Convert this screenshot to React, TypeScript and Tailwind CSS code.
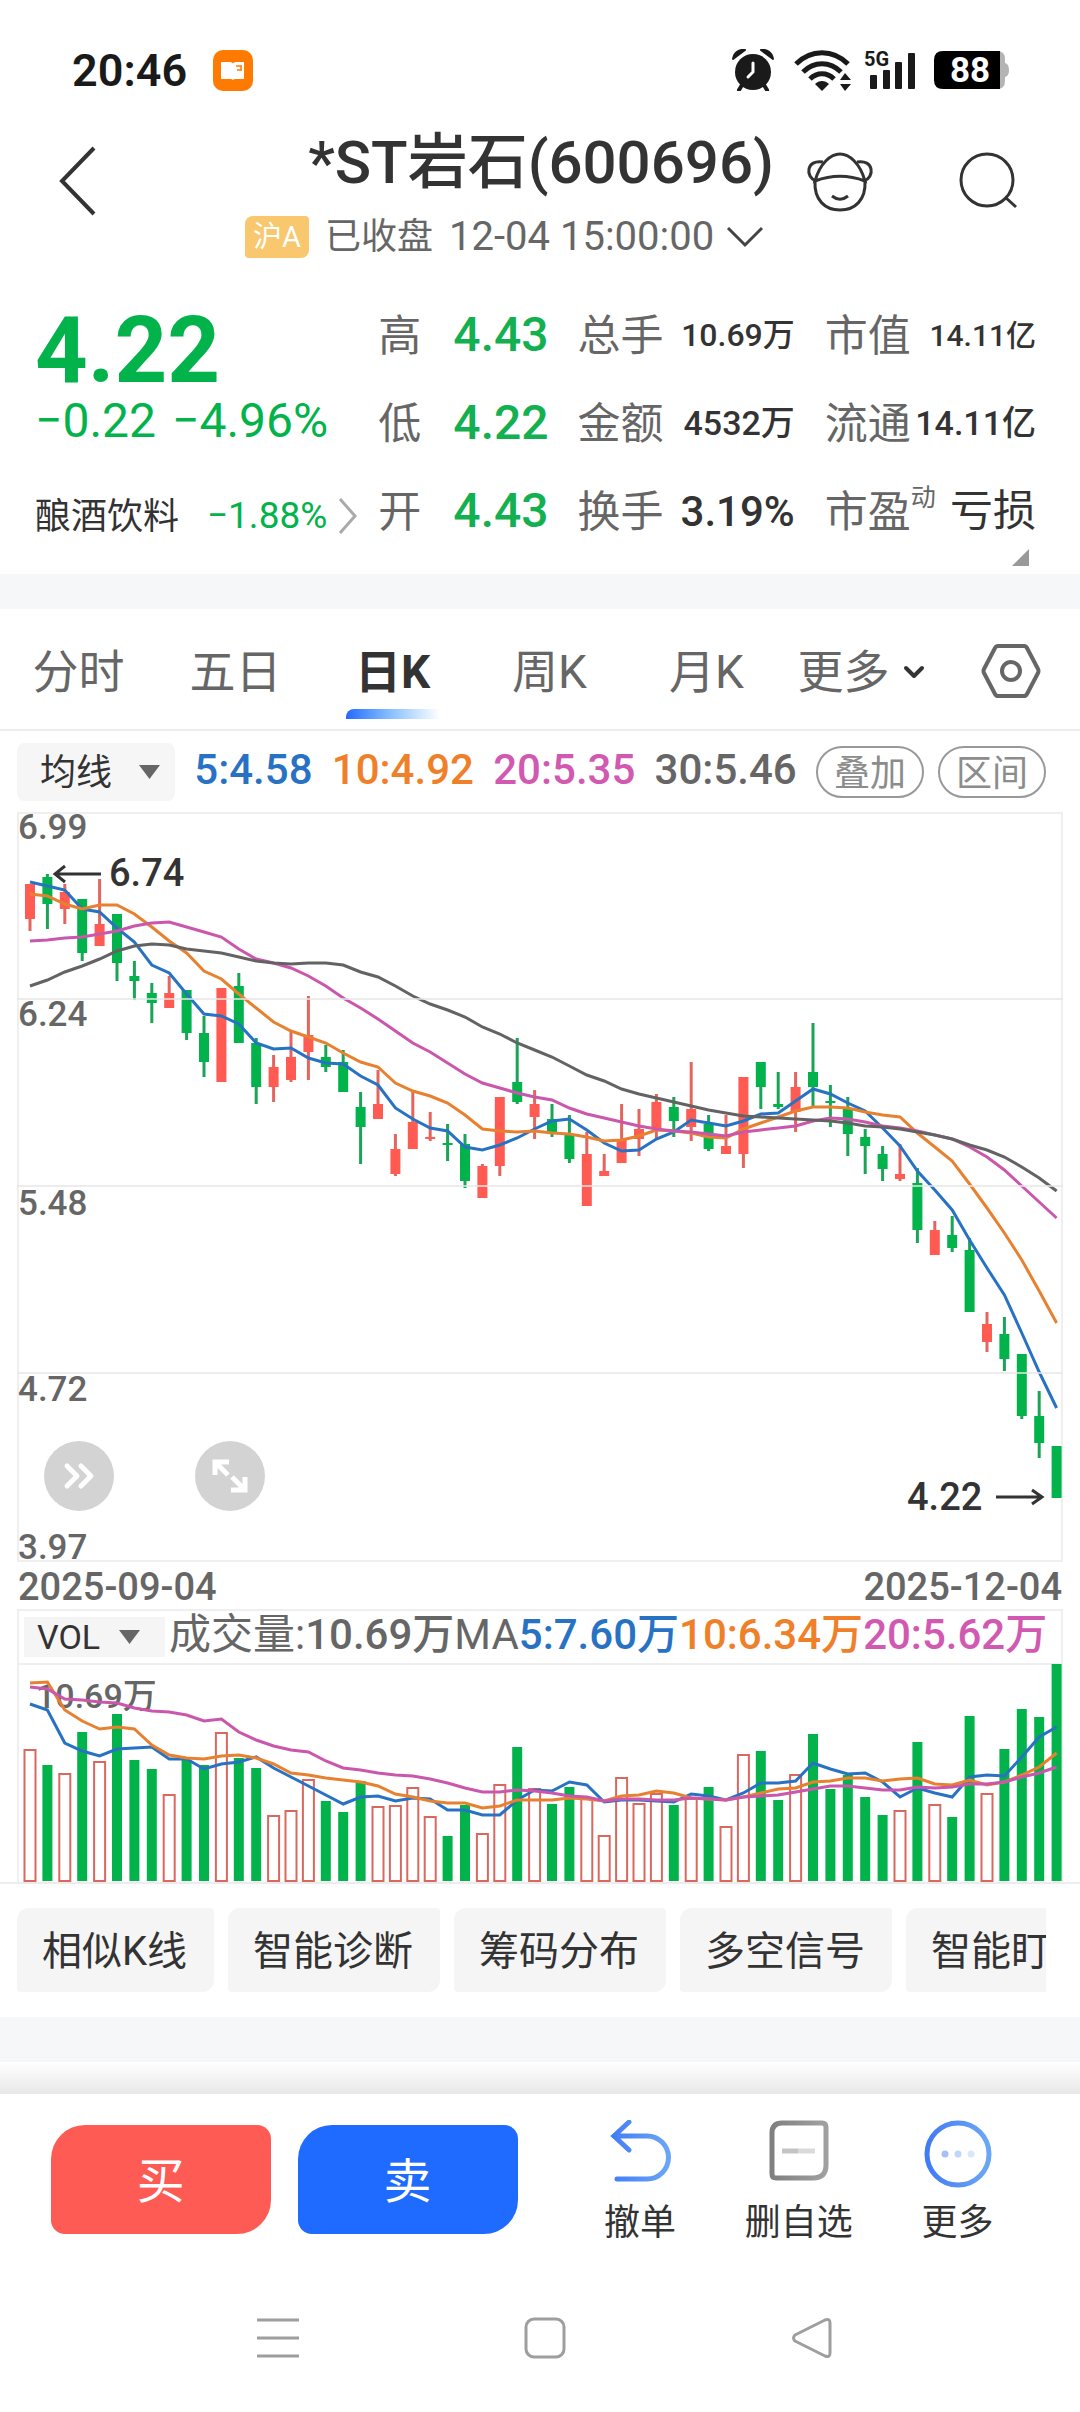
import React from "react";
import { ChevronDown, ChevronsRight } from "lucide-react";

type Candle = [dir: number, high: number, top: number, bottom: number, low: number];

// [1: 上涨 / 0: 下跌, 最高, 实体上沿, 实体下沿, 最低]
const candles: Candle[] = [
    [1, 72, 72, 107, 119], [0, 62, 65, 92, 117], [1, 72, 80, 97, 112], [0, 87, 87, 141, 149],
    [1, 67, 112, 134, 134], [0, 102, 102, 151, 169], [0, 149, 164, 169, 188], [0, 171, 181, 191, 211],
    [1, 164, 181, 196, 196], [0, 178, 178, 221, 228], [0, 204, 221, 250, 265], [1, 176, 176, 270, 270],
    [0, 161, 174, 231, 231], [0, 226, 231, 275, 292], [1, 243, 255, 275, 290], [1, 220, 245, 268, 270],
    [1, 184, 223, 240, 268], [0, 233, 245, 255, 260], [0, 238, 250, 280, 280], [0, 280, 295, 315, 352],
    [1, 258, 292, 307, 307], [1, 322, 337, 362, 364], [1, 279, 310, 337, 337], [1, 300, 325, 327, 329],
    [0, 312, 331, 333, 349], [0, 322, 332, 369, 376], [1, 352, 354, 386, 386], [1, 285, 285, 354, 364],
    [0, 226, 270, 290, 292], [1, 278, 292, 305, 327], [0, 292, 307, 320, 325], [0, 303, 322, 347, 351],
    [1, 320, 342, 394, 394], [1, 342, 359, 364, 364], [1, 292, 327, 351, 351], [1, 297, 317, 327, 344],
    [1, 282, 290, 317, 327], [0, 285, 295, 309, 325], [1, 250, 297, 315, 329], [0, 303, 312, 337, 339],
    [1, 303, 334, 342, 342], [1, 265, 265, 342, 356], [0, 250, 250, 275, 297], [0, 260, 292, 295, 297],
    [1, 260, 275, 300, 320], [0, 211, 260, 275, 295], [0, 273, 289, 291, 315], [0, 285, 297, 322, 344],
    [0, 317, 325, 334, 362], [0, 334, 342, 357, 369], [1, 332, 362, 367, 369], [0, 356, 371, 418, 431],
    [1, 409, 418, 443, 443], [0, 404, 423, 436, 440], [0, 426, 438, 500, 500], [1, 500, 512, 530, 540],
    [0, 505, 522, 547, 559], [0, 542, 542, 604, 607], [0, 579, 604, 631, 646], [0, 634, 634, 686, 686],
];

const volumes = [
    86, 102, 110, 69, 98, 51, 97, 106, 131, 97, 102, 69, 95, 105, 152, 147, 116, 138, 149, 118,
    143, 142, 124, 153, 173, 142, 170, 121, 84, 125, 141, 124, 134, 172, 114, 140, 130, 142, 135, 124,
    163, 91, 88, 137, 111, 71, 126, 112, 134, 152, 147, 79, 141, 154, 53, 130, 86, 46, 54, 1,
];

const BLUE = "#2872c4";
const ORANGE = "#e8812f";
const PINK = "#cb57ad";
const GRAY = "#636363";

const priceLines = [
    {
        color: BLUE,
        ys: [
            70, 74, 78, 97, 100, 116, 130, 153, 161, 182, 202, 204, 212, 231, 237, 236, 246, 251, 252, 264,
            273, 296, 307, 316, 319, 335, 338, 333, 326, 317, 309, 307, 318, 331, 339, 338, 327, 320, 308, 311,
            314, 309, 302, 301, 289, 277, 282, 291, 299, 316, 334, 359, 378, 398, 428, 456, 483, 521, 560, 596,
        ],
    },
    {
        color: ORANGE,
        ys: [
            82, 84, 92, 97, 93, 93, 102, 115, 129, 141, 159, 167, 182, 196, 210, 219, 225, 231, 241, 250,
            255, 271, 279, 284, 291, 303, 317, 319, 320, 319, 321, 322, 325, 329, 328, 324, 318, 319, 321, 325,
            326, 317, 311, 305, 299, 295, 295, 296, 300, 303, 305, 321, 335, 349, 372, 396, 421, 448, 479, 511,
        ],
    },
    {
        color: PINK,
        ys: [
            129, 128, 126, 125, 122, 119, 114, 111, 110, 115, 120, 125, 137, 147, 151, 156, 164, 174, 186, 196,
            207, 219, 231, 240, 251, 262, 271, 276, 281, 285, 288, 296, 302, 306, 310, 314, 317, 319, 320, 322,
            324, 320, 318, 316, 314, 309, 306, 307, 310, 314, 316, 319, 323, 327, 335, 345, 358, 374, 390, 406,
        ],
    },
    {
        color: GRAY,
        ys: [
            174, 168, 160, 154, 147, 139, 134, 132, 133, 137, 139, 141, 145, 149, 151, 152, 151, 151, 153, 160,
            165, 174, 184, 192, 198, 205, 215, 222, 231, 238, 245, 254, 263, 269, 277, 282, 286, 290, 294, 298,
            301, 304, 305, 306, 307, 308, 309, 311, 314, 315, 317, 320, 323, 327, 333, 338, 345, 355, 366, 379,
        ],
    },
];

const volumeLines = [
    {
        color: BLUE,
        ys: [
            41, 47, 80, 88, 93, 86, 85, 84, 96, 96, 106, 101, 99, 94, 105, 114, 123, 132, 141, 134,
            133, 138, 135, 136, 147, 147, 152, 152, 137, 127, 128, 119, 122, 139, 137, 137, 138, 139, 131, 133,
            137, 130, 120, 120, 118, 100, 106, 111, 110, 119, 134, 125, 130, 134, 114, 112, 113, 94, 74, 64,
        ],
    },
    {
        color: ORANGE,
        ys: [
            20, 19, 47, 58, 66, 64, 66, 82, 92, 95, 96, 93, 92, 95, 101, 110, 112, 115, 117, 119,
            123, 131, 134, 138, 140, 140, 145, 143, 137, 137, 137, 135, 136, 138, 133, 132, 128, 130, 135, 136,
            137, 134, 130, 126, 125, 119, 118, 115, 115, 118, 116, 115, 121, 122, 117, 122, 119, 112, 104, 90,
        ],
    },
    {
        color: PINK,
        ys: [
            24, 26, 36, 37, 39, 40, 45, 48, 49, 52, 58, 56, 69, 77, 83, 87, 89, 98, 105, 107,
            110, 112, 113, 116, 120, 125, 129, 129, 127, 128, 130, 133, 134, 138, 136, 136, 137, 137, 135, 136,
            137, 134, 133, 132, 129, 126, 123, 123, 125, 127, 127, 124, 125, 124, 121, 121, 119, 114, 110, 104,
        ],
    },
];

const priceLabels = [
    { text: "6.99", y: 27 },
    { text: "6.24", y: 214 },
    { text: "5.48", y: 403 },
    { text: "4.72", y: 589 },
    { text: "3.97", y: 747 },
];

const tabs = ["分时", "五日", "日K", "周K", "月K"];
const tools = ["相似K线", "智能诊断", "筹码分布", "多空信号", "智能盯盘"];

const xAt = (i: number) => 13 + i * 17.4;
const toPoints = (ys: number[]) => ys.map((y, i) => `${xAt(i)},${y}`).join(" ");

const StatusBar: React.FC = () => (
    <div className="flex h-28 items-center justify-between pt-7 pr-[71px] pl-[72px]">
        <div className="flex items-center gap-[26px]">
            <span className="text-[45px] leading-none font-semibold text-[#1a1a1a]">20:46</span>
            <svg width="40" height="41" viewBox="0 0 40 41">
                <rect width="40" height="41" rx="10" fill="#ff7a00" />
                <path d="M8 12h9c2 0 3 1 3 2 0-1 1-2 3-2h8v17h-9c-1 0-2 1-2 1s-1-1-2-1H8z" fill="#fff" />
                <path d="M23 16h6M24 20h5M28 16v4" stroke="#ff7a00" strokeWidth="1.5" />
            </svg>
        </div>
        <div className="flex items-center">
            <svg width="42" height="42" viewBox="0 0 42 42" className="mr-5">
                <circle cx="21" cy="23" r="18" fill="#1a1a1a" />
                <path d="M10 36l-3 5M32 36l3 5" stroke="#1a1a1a" strokeWidth="4" strokeLinecap="round" />
                <path d="M1 10C2 4 7 0 13 1z" fill="#1a1a1a" stroke="#1a1a1a" strokeWidth="2" strokeLinejoin="round" />
                <path d="M41 10C40 4 35 0 29 1z" fill="#1a1a1a" stroke="#1a1a1a" strokeWidth="2" strokeLinejoin="round" />
                <path d="M21 14v9l-5 5" fill="none" stroke="#fff" strokeWidth="3" strokeLinecap="round" />
            </svg>
            <svg width="58" height="41" viewBox="0 0 58 41" className="mr-3">
                <g fill="none" stroke="#1a1a1a" strokeWidth="5">
                    <path d="M2 14C17-1 39-1 54 14" />
                    <path d="M9 22C20 11 36 11 47 22" />
                    <path d="M16 29C23 22 33 22 40 29" />
                </g>
                <path d="M21 34c4-4 10-4 14 0l-7 7z" fill="#1a1a1a" />
                <path d="M46 30l5-7 6 7zM46 34h11l-6 7z" fill="#1a1a1a" />
            </svg>
            <svg width="54" height="40" viewBox="0 0 54 40" className="mr-4 overflow-visible">
                <text x="0" y="16" fontSize="20" fontWeight="700" fill="#1a1a1a">5G</text>
                <rect x="6" y="25" width="7" height="14" rx="1" fill="#1a1a1a" />
                <rect x="19" y="20" width="7" height="19" rx="1" fill="#1a1a1a" />
                <rect x="31" y="12" width="7" height="27" rx="1" fill="#1a1a1a" />
                <rect x="44" y="3" width="7" height="36" rx="1" fill="#1a1a1a" />
            </svg>
            <svg width="75" height="40" viewBox="0 0 75 40">
                <path d="M60 1h3q8 0 8 8v4q4 1 4 7t-4 7v4q0 8-8 8h-3z" fill="#b4b4b4" />
                <path d="M9 1h57v38H9q-9 0-9-9V10q0-9 9-9z" fill="#000" />
                <text x="36" y="32" textAnchor="middle" fontSize="35" fontWeight="700" fill="#fff">88</text>
            </svg>
        </div>
    </div>
);

const Header: React.FC = () => (
    <header className="flex pt-[15px] pr-[62px]">
        <div className="flex w-[245px] shrink-0 items-start pt-[19px] pl-[57px]">
            <button aria-label="返回">
                <svg width="40" height="70" viewBox="0 0 40 70" fill="none" stroke="#333" strokeWidth="4">
                    <path d="M37 2L5 35l32 33" />
                </svg>
            </button>
        </div>
        <div className="flex flex-1 flex-col">
            <h1 className="self-end pr-1 text-[60px] leading-[72px] font-medium whitespace-nowrap text-[#333]">*ST岩石(600696)</h1>
            <button className="mt-4 flex items-center self-start text-[36px] leading-[44px] whitespace-nowrap text-[#666]">
                <span className="mr-4 h-[42px] w-16 rounded-tl-lg rounded-tr-sm rounded-br-lg rounded-bl-sm bg-[#f8c76e] text-center text-[29px] leading-[42px] text-white">沪A</span>
                已收盘
                <span className="ml-4 text-[40px]">12-04 15:00:00</span>
                <svg width="38" height="24" viewBox="0 0 38 24" fill="none" stroke="#444" strokeWidth="3" className="ml-3">
                    <path d="M2 3l17 17L36 3" />
                </svg>
            </button>
        </div>
        <div className="flex items-start gap-[84px] pt-6 pl-7">
            <button aria-label="智能助手">
                <svg width="68" height="62" viewBox="0 0 68 62" fill="none" stroke="#333" strokeWidth="3">
                    <path d="M9 30C14 12 25 3 34 3s20 9 25 27C43 24 25 24 9 30z" />
                    <path d="M9 30c-1 19 10 29 25 29s26-10 25-29" />
                    <path d="M10 30C-1 26 0 8 17 11M58 30C69 26 68 8 51 11" />
                    <path d="M26 45c5 4 11 4 16 0" />
                </svg>
            </button>
            <button aria-label="搜索">
                <svg width="60" height="60" viewBox="0 0 60 60" fill="none" stroke="#333" strokeWidth="3">
                    <circle cx="29" cy="29" r="26" />
                    <path d="M47 46l11 10" />
                </svg>
            </button>
        </div>
    </header>
);

const QuoteRow: React.FC<{ label: React.ReactNode; children: React.ReactNode; className: string }> = ({ label, children, className }) => (
    <div className="flex h-[88px] items-center justify-between whitespace-nowrap">
        <dt className="flex pt-[2px] text-[43px] text-[#666]">{label}</dt>
        <dd className={className}>{children}</dd>
    </div>
);

const QuotePanel: React.FC = () => (
    <section className="relative grid grid-cols-[343fr_199fr_247fr_211fr] pt-8 pr-11 pb-[19px] pl-[35px]">
        <div className="pr-5 whitespace-nowrap text-[#02b34b]">
            <p className="mt-3 text-[92px] leading-[96px] font-bold">4.22</p>
            <p className="flex gap-4 text-[48px] leading-[44px]">
                <span>−0.22</span>
                <span>−4.96%</span>
            </p>
            <a href="#sector" className="mt-12 flex items-center justify-between text-[36px] leading-[48px]">
                <span className="pt-[2px] text-[#333]">酿酒饮料</span>
                <span className="flex items-center gap-[11px] text-[37px]">
                    −1.88%
                    <svg width="20" height="38" viewBox="0 0 20 38" fill="none" stroke="#aaa" strokeWidth="3">
                        <path d="M2 2l15 17L2 36" />
                    </svg>
                </span>
            </a>
        </div>
        <dl className="pr-[29px]">
            <QuoteRow label="高" className="text-[48px] font-medium text-[#12b050]">4.43</QuoteRow>
            <QuoteRow label="低" className="text-[48px] font-medium text-[#12b050]">4.22</QuoteRow>
            <QuoteRow label="开" className="text-[48px] font-medium text-[#12b050]">4.43</QuoteRow>
        </dl>
        <dl className="pr-[30px]">
            <QuoteRow label="总手" className="text-[32px] font-medium text-[#333]">10.69万</QuoteRow>
            <QuoteRow label="金额" className="text-[34px] font-medium text-[#333]">4532万</QuoteRow>
            <QuoteRow label="换手" className="text-[42px] font-medium text-[#333]">3.19%</QuoteRow>
        </dl>
        <dl>
            <QuoteRow label="市值" className="text-[30px] font-medium text-[#333]">14.11亿</QuoteRow>
            <QuoteRow label="流通" className="text-[34px] font-medium text-[#333]">14.11亿</QuoteRow>
            <QuoteRow
                label={
                    <>
                        市盈<span className="text-[25px] leading-9">动</span>
                    </>
                }
                className="text-[43px] text-[#333]"
            >
                亏损
            </QuoteRow>
        </dl>
        <svg width="17" height="17" viewBox="0 0 17 17" className="absolute right-[51px] bottom-2">
            <path d="M17 0v17H0z" fill="#999" />
        </svg>
    </section>
);

const PeriodTabs: React.FC = () => (
    <nav className="flex h-[122px] border-b-2 border-[#ececec] text-[46px] text-[#666]">
        {tabs.map((tab) => (
            <button key={tab} className="relative flex-[157] pt-[6px] whitespace-nowrap">
                {tab === "日K" ? (
                    <>
                        <span className="font-bold text-[#333]">{tab}</span>
                        <span className="absolute bottom-[10px] left-1/2 h-[10px] w-[94px] -translate-x-1/2 rounded-tl-lg bg-linear-to-r from-[#2468ff] via-[#8fc3ff] to-white" />
                    </>
                ) : (
                    tab
                )}
            </button>
        ))}
        <button className="flex flex-[157] items-center justify-center gap-2 pt-[6px] whitespace-nowrap">
            更多
            <ChevronDown className="size-8 text-[#333]" strokeWidth={3} />
        </button>
        <button aria-label="设置" className="flex flex-[138] items-center justify-center pt-1">
            <svg width="60" height="54" viewBox="0 0 60 54" fill="none" stroke="#666" strokeWidth="4">
                <path d="M17 2h26q2 0 3 2l11 21q1 2 0 4L46 50q-1 2-3 2H17q-2 0-3-2L3 29q-1-2 0-4L14 4q1-2 3-2z" />
                <circle cx="30" cy="27" r="9" />
            </svg>
        </button>
    </nav>
);

const DownMark: React.FC<{ className: string }> = ({ className }) => (
    <svg width="21" height="14" viewBox="0 0 21 14" className={className}>
        <path d="M0 0h21L10.500 14z" fill="#666" />
    </svg>
);

const IndicatorRow: React.FC = () => (
    <div className="flex h-[81px] items-center justify-between pr-[34px] pl-[17px] text-[42px] leading-[44px] font-medium whitespace-nowrap">
        <label className="relative flex items-center">
            <select
                aria-label="主图指标"
                className="h-[58px] w-[158px] appearance-none rounded-lg bg-[#f6f6f6] pt-[2px] pl-[23px] text-[36px] font-normal text-[#333]"
            >
                <option>均线</option>
            </select>
            <DownMark className="pointer-events-none absolute right-[15px]" />
        </label>
        <span className="pb-1 text-[#2872c4]">5:4.58</span>
        <span className="pb-1 text-[#f07f2a]">10:4.92</span>
        <span className="pb-1 text-[#d159b1]">20:5.35</span>
        <span className="pb-1 text-[#666]">30:5.46</span>
        <div className="flex gap-[14px] text-[36px] font-normal text-[#8c8c8c]">
            <button className="h-[52px] w-[108px] rounded-full border-2 border-[#999] pt-[2px] leading-[48px]">叠加</button>
            <button className="h-[52px] w-[108px] rounded-full border-2 border-[#999] pt-[2px] leading-[48px]">区间</button>
        </div>
    </div>
);

const PriceChart: React.FC = () => (
    <div className="relative">
        <svg viewBox="0 0 1046 750" className="block w-full overflow-visible" role="img" aria-label="日K线图">
            <rect x="1" y="1" width="1044" height="748" fill="none" stroke="#efefef" strokeWidth="2" />
            {candles.map(([dir, high, top, bottom, low], i) => (
                <g key={i}>
                    <rect x={xAt(i) - 1.5} y={high} width="3" height={low - high} fill={dir ? "#e3655e" : "#1aa456"} />
                    <rect x={xAt(i) - 5} y={top} width="10" height={bottom - top} fill={dir ? "#ff5b53" : "#02b34b"} />
                </g>
            ))}
            {priceLines.map((line) => (
                <polyline key={line.color} points={toPoints(line.ys)} fill="none" stroke={line.color} strokeWidth="3" />
            ))}
            <path d="M0 187h1046M0 374h1046M0 561h1046" stroke="#e6e6e6" strokeWidth="1.500" />
            <g fontSize="35" fontWeight="500" fill="#666">
                {priceLabels.map((label) => (
                    <text key={label.text} x="1" y={label.y}>{label.text}</text>
                ))}
            </g>
            <g fontSize="38" fontWeight="500" fill="#333">
                <text x="92" y="74">6.74</text>
                <text x="890" y="698">4.22</text>
            </g>
            <g fill="none" stroke="#333" strokeWidth="3">
                <path d="M84 62H38M48 54l-10 8 10 8" />
                <path d="M979 685h46M1015 678l10 7-10 7" />
            </g>
        </svg>
        <div className="absolute bottom-[51px] left-[27px] flex gap-[81px]">
            <button aria-label="展开" className="flex size-[70px] items-center justify-center rounded-full bg-[#d3d3d3] text-white">
                <ChevronsRight className="size-12" strokeWidth={2.5} />
            </button>
            <button aria-label="全屏" className="flex size-[70px] items-center justify-center rounded-full bg-[#d3d3d3]">
                <svg width="36" height="36" viewBox="0 0 36 36" fill="none" stroke="#fff" strokeWidth="5">
                    <path d="M3 17V4h14M4 5l12 12M33 19v13H19M32 31L20 19" />
                </svg>
            </button>
        </div>
    </div>
);

const VolumeChart: React.FC = () => (
    <svg viewBox="0 0 1046 219" className="block w-full overflow-visible" role="img" aria-label="成交量图">
        <path d="M1 219V1h1044v218" fill="none" stroke="#efefef" strokeWidth="2" />
        {volumes.map((y, i) =>
            candles[i][0] ? (
                <rect key={i} x={xAt(i) - 5.5} y={y + 1} width="11" height={217 - y} fill="#fff" stroke="#d9685f" strokeWidth="2" />
            ) : (
                <rect key={i} x={xAt(i) - 5} y={y} width="10" height={218 - y} fill="#02b34b" />
            )
        )}
        <text x="19" y="45" fontSize="34" fontWeight="500" fill="#666">10.69万</text>
        {volumeLines.map((line) => (
            <polyline key={line.color} points={toPoints(line.ys)} fill="none" stroke={line.color} strokeWidth="3" />
        ))}
    </svg>
);

const ChartSection: React.FC = () => (
    <section>
        <PeriodTabs />
        <IndicatorRow />
        <div className="px-[17px]">
            <PriceChart />
            <div className="flex h-[47px] items-center justify-between px-[1px] pt-[2px] text-[38px] leading-[44px] font-medium text-[#666]">
                <span>2025-09-04</span>
                <span>2025-12-04</span>
            </div>
            <div className="flex h-[54px] items-center border-x-2 border-t-2 border-[#efefef] pl-[5px] text-[42px] leading-[48px] font-medium whitespace-nowrap">
                <label className="relative mr-1 flex items-center">
                    <select
                        aria-label="副图指标"
                        className="h-10 w-[141px] appearance-none bg-[#f5f5f5] pl-[13px] text-[34px] leading-10 font-normal text-[#333]"
                    >
                        <option>VOL</option>
                    </select>
                    <DownMark className="pointer-events-none absolute right-[25px]" />
                </label>
                <div className="flex pb-1">
                    <span className="font-normal text-[#666]">成交量:</span>
                    <span className="text-[#666]">10.69万</span>
                    <span className="font-normal text-[#666]">MA</span>
                    <span className="text-[#2872c4]">5:7.60万</span>
                    <span className="text-[#f07f2a]">10:6.34万</span>
                    <span className="text-[#d159b1]">20:5.62万</span>
                </div>
            </div>
            <VolumeChart />
        </div>
        <div className="border-t-2 border-[#ececec] pt-6 pr-[34px] pb-[25px] pl-[17px]">
            <div className="flex gap-[14px] overflow-hidden">
                {tools.map((tool) => (
                    <button
                        key={tool}
                        className="h-[84px] shrink-0 rounded-tl-xl rounded-tr-sm rounded-br-xl rounded-bl-sm bg-[#f5f5f5] pt-1 pr-[27px] pl-[25px] text-[40px] whitespace-nowrap text-[#333]"
                    >
                        {tool}
                    </button>
                ))}
            </div>
        </div>
    </section>
);

const TradeBar: React.FC = () => (
    <footer>
        <div className="h-8 bg-linear-to-b from-white to-[#e8e8e8]" />
        <div className="flex items-start pt-[26px] pr-[43px] pl-[51px]">
            <div className="flex flex-[466] gap-[27px] pt-[5px] text-[48px] text-white">
                <button className="h-[109px] flex-1 rounded-tl-[34px] rounded-tr-[14px] rounded-br-[34px] rounded-bl-[14px] bg-[#ff5b55] pt-1">买</button>
                <button className="h-[109px] flex-1 rounded-tl-[34px] rounded-tr-[14px] rounded-br-[34px] rounded-bl-[14px] bg-[#1f6bff] pt-1">卖</button>
            </div>
            <div className="ml-[43px] grid flex-[476] grid-cols-3 text-[36px] leading-[50px] whitespace-nowrap text-[#333]">
                <button className="flex flex-col items-center">
                    <svg width="68" height="68" viewBox="0 0 68 68" fill="none" stroke="url(#blueLine)" strokeWidth="5" strokeLinecap="round">
                        <defs>
                            <linearGradient id="blueLine" gradientUnits="userSpaceOnUse" x1="6" y1="0" x2="62" y2="0">
                                <stop stopColor="#437df6" />
                                <stop offset="1" stopColor="#6ba5f6" />
                            </linearGradient>
                        </defs>
                        <path d="M23 2L8 16l15 14M8 16h33a21 21 0 0 1 0 43H11" />
                    </svg>
                    <span className="mt-[10px]">撤单</span>
                </button>
                <button className="flex flex-col items-center">
                    <svg width="68" height="68" viewBox="0 0 68 68" fill="none" strokeWidth="5">
                        <defs>
                            <linearGradient id="grayLine" x1="0" y1="0" x2="1" y2="0">
                                <stop stopColor="#808080" />
                                <stop offset="1" stopColor="#a0a0a0" />
                            </linearGradient>
                        </defs>
                        <path d="M17 3h40q4 0 4 4v38q0 13-13 13H11q-4 0-4-4V13Q7 3 17 3z" stroke="url(#grayLine)" />
                        <path d="M17 31h16" stroke="#c4c4c4" />
                        <path d="M33 31h17" stroke="#dadada" />
                    </svg>
                    <span className="mt-[10px]">删自选</span>
                </button>
                <button className="flex flex-col items-center">
                    <svg width="68" height="68" viewBox="0 0 68 68" fill="none">
                        <circle cx="34" cy="34" r="31" stroke="url(#blueLine)" strokeWidth="5" />
                        <circle cx="21" cy="34" r="3.500" fill="#a5c0f5" />
                        <circle cx="34" cy="34" r="3.500" fill="#c0d5f8" />
                        <circle cx="47" cy="34" r="3.500" fill="#d8e8fb" />
                    </svg>
                    <span className="mt-[10px]">更多</span>
                </button>
            </div>
        </div>
        <div className="flex items-center justify-center gap-[225px] pt-[69px] pb-[52px] pl-[10px]">
            <button aria-label="最近任务">
                <svg width="42" height="42" viewBox="0 0 42 42" stroke="#9e9e9e" strokeWidth="3">
                    <path d="M0 3h42M0 21h42M0 39h42" />
                </svg>
            </button>
            <button aria-label="主屏幕">
                <svg width="42" height="42" viewBox="0 0 42 42" fill="none" stroke="#9e9e9e" strokeWidth="3">
                    <rect x="2" y="2" width="38" height="38" rx="8" />
                </svg>
            </button>
            <button aria-label="返回上一页">
                <svg width="42" height="42" viewBox="0 0 42 42" fill="none" stroke="#9e9e9e" strokeWidth="3" strokeLinejoin="round">
                    <path d="M34 3L4 18q-3 3 0 6l30 15q5 2 5-3V6q0-5-5-3z" />
                </svg>
            </button>
        </div>
    </footer>
);

const App: React.FC = () => {
    return (
        <div className="bg-white font-[Roboto,'Noto_Sans_CJK_SC',sans-serif]">
            <StatusBar />
            <Header />
            <main>
                <QuotePanel />
                <div className="h-[35px] bg-[#f5f7f9]" />
                <ChartSection />
                <div className="h-[45px] bg-[#f5f7f9]" />
            </main>
            <TradeBar />
        </div>
    );
};

export default App;
